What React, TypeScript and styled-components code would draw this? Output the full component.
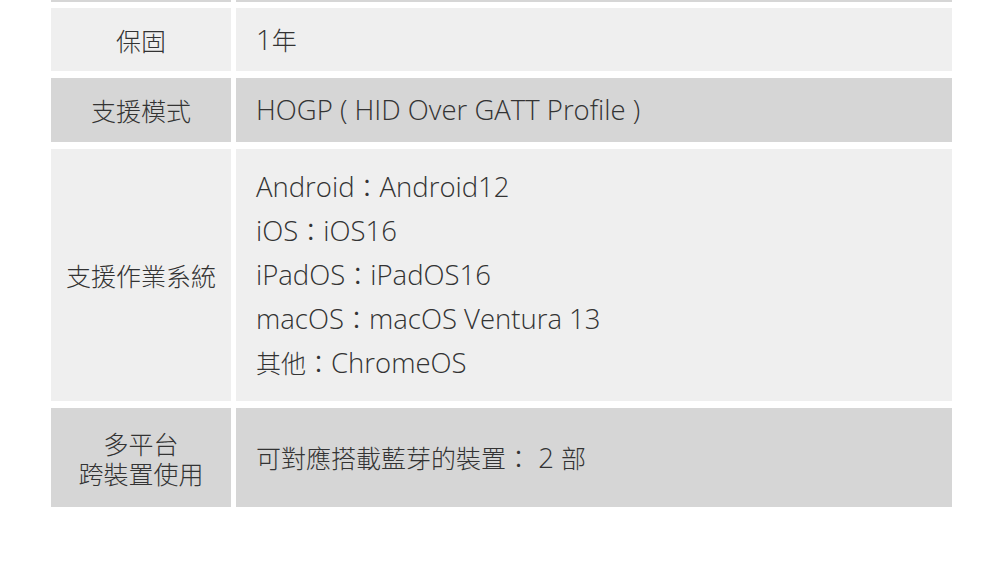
import * as React from 'react';
import styled, { createGlobalStyle } from 'styled-components';

const GlobalStyle = createGlobalStyle`
  html, body {
    margin: 0;
    padding: 0;
    background: #ffffff;
    overflow: hidden;
  }
  body {
    font-family: "Open Sans", "Noto Sans CJK TC", sans-serif;
    color: #333333;
  }
`

interface ISpec {
  label: string[];
  value: string[];
  height: number;
}

const specs: ISpec[] = [
  { label: ['保固'], value: ['1年'], height: 63 },
  { label: ['支援模式'], value: ['HOGP ( HID Over GATT Profile )'], height: 64 },
  {
    label: ['支援作業系統'],
    value: [
      'Android：Android12',
      'iOS：iOS16',
      'iPadOS：iPadOS16',
      'macOS：macOS Ventura 13',
      '其他：ChromeOS',
    ],
    height: 252,
  },
  { label: ['多平台', '跨裝置使用'], value: ['可對應搭載藍芽的裝置： 2 部'], height: 99 },
]

// latin glyphs sit bigger than the han ones in the original font, so split runs
const mixed = (text: string) =>
  text.split(/([\u3000-\u9fff\uff00-\uffef]+)/).map((part, i) =>
    /[\u3000-\u9fff\uff00-\uffef]/.test(part) ? <Han key={i}>{part}</Han> : part
  )

class App extends React.Component {
  public render() {
    return (
      <Page>
        <GlobalStyle />
        <SpecTable>
          <EdgeCell />
          <EdgeCell />
          {specs.map((row, i) => (
            <React.Fragment key={i}>
              <LabelCell dark={i % 2 === 1} h={row.height}>
                {row.label.map(l => (
                  <LabelLine key={l}>{l}</LabelLine>
                ))}
              </LabelCell>
              <ValueCell dark={i % 2 === 1} h={row.height}>
                {row.value.map(v => (
                  <ValueLine key={v}>{mixed(v)}</ValueLine>
                ))}
              </ValueCell>
            </React.Fragment>
          ))}
        </SpecTable>
      </Page>
    );
  }
}

const Page = styled.div`
  width: 1000px;
  height: 570px;
  overflow: hidden;
  padding: 0 48px 0 51px;
  box-sizing: border-box;
`

const SpecTable = styled.div`
  display: grid;
  grid-template-columns: 180px 716px;
  column-gap: 5px;
  row-gap: 7px;
`

const EdgeCell = styled.div`
  height: 2px;
  margin-bottom: -1px;
  background-color: #d6d6d6;
`

const Cell = styled.div<{ dark: boolean; h: number }>`
  background-color: ${props => (props.dark ? '#d6d6d6' : '#efefef')};
  height: ${props => props.h}px;
  display: flex;
  flex-direction: column;
  justify-content: center;
`

const LabelCell = styled(Cell)`
  align-items: center;
  text-align: center;
`

const ValueCell = styled(Cell)`
  padding-left: 20px;
`

const LabelLine = styled.div`
  font-family: "Noto Sans CJK TC", sans-serif;
  font-size: 25px;
  font-weight: 300;
  line-height: 30px;
  white-space: nowrap;
`

const ValueLine = styled.div`
  height: 44px;
  font-size: 27.5px;
  font-weight: 300;
  line-height: 44px;
  white-space: nowrap;
`

const Han = styled.span`
  font-family: "Noto Sans CJK TC", sans-serif;
  font-size: 25px;
  line-height: 1;
`

export default App;
